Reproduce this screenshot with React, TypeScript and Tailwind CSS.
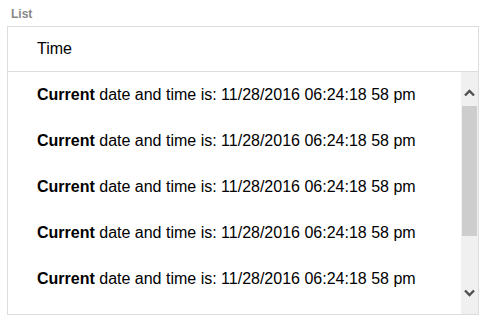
const rows = Array.from({ length: 5 });

const ScrollBar = () => (
  <div className="flex w-[17px] flex-col bg-[#f0f0f0]">
    <div className="flex h-[34px] justify-center pt-[17px]">
      <svg width="11" height="8" viewBox="0 0 11 8">
        <path d="M1 6.5 L5.5 2 L10 6.5" fill="none" stroke="#505050" strokeWidth="2.4" />
      </svg>
    </div>
    <div className="mx-px h-[130px] bg-[#cdcdcd]" />
    <div className="flex-1" />
    <div className="flex h-[34px] justify-center pt-[9px]">
      <svg width="11" height="8" viewBox="0 0 11 8">
        <path d="M1 1.5 L5.5 6 L10 1.5" fill="none" stroke="#505050" strokeWidth="2.4" />
      </svg>
    </div>
  </div>
);

export default function App() {
  return (
    <div
      className="h-[324px] w-[487px] bg-white"
      style={{ fontFamily: '"Liberation Sans", Arial, sans-serif' }}
    >
      <div className="flex h-[26px] items-center pl-[11px] pt-[2px] text-[12px] font-bold text-[#888888]">
        List
      </div>
      <div className="ml-[7px] w-[472px] border border-[#dddddd]">
        <div className="flex h-[45px] items-center border-b border-[#dddddd] pl-[29px] text-[16px] text-black">
          Time
        </div>
        <div className="flex h-[242px]">
          <div className="flex-1 overflow-hidden">
            {rows.map((_, i) => (
              <div
                key={i}
                className="flex h-[46px] items-center pl-[29px] text-[16px] text-black"
              >
                <span className="font-bold">Current</span>
                <span>&nbsp;date and time is: 11/28/2016 06:24:18 58 pm</span>
              </div>
            ))}
          </div>
          <ScrollBar />
        </div>
      </div>
    </div>
  );
}
